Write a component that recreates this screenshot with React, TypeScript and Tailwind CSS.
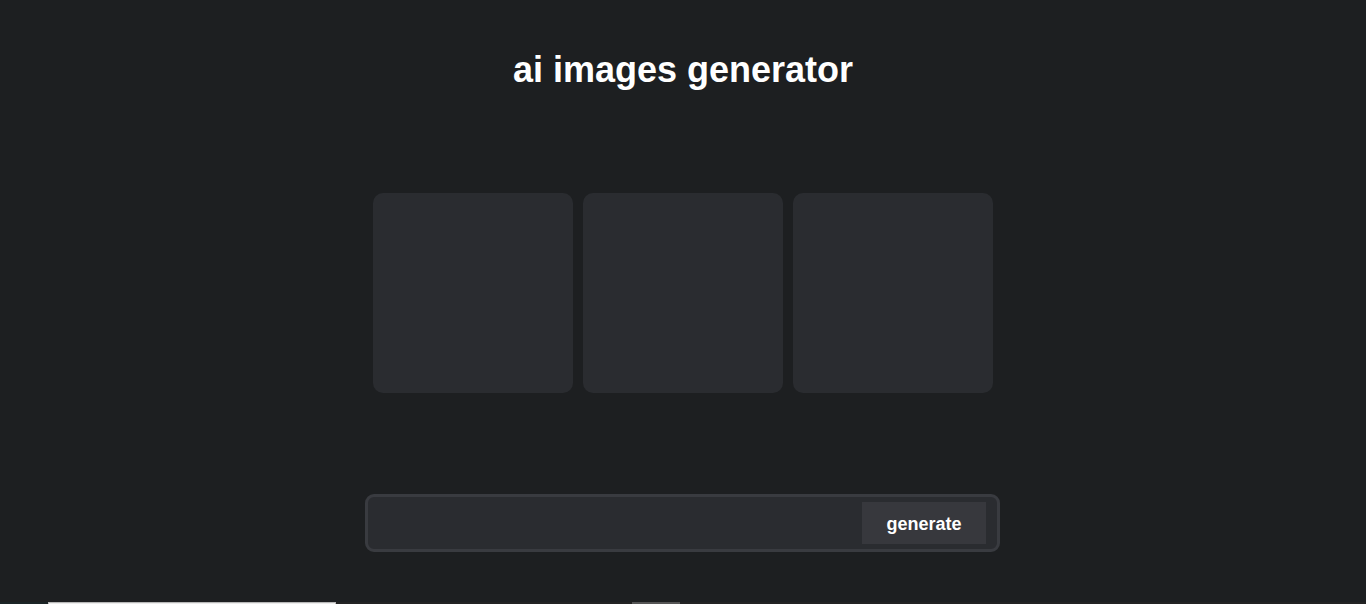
import { useState } from "react";

export default function App() {
  const [prompt, setPrompt] = useState("");
  const images = [0, 1, 2];

  return (
    <div className="min-h-screen bg-[#1d1f21] text-white font-['Liberation_Sans',Arial,sans-serif]">
      <main className="h-[602px] flex flex-col items-center">
        <h1 className="mt-[49px] text-[36px] leading-[42px] font-bold">
          ai images generator
        </h1>

        <div className="mt-[102px] flex gap-[10px]">
          {images.map((i) => (
            <div key={i} className="w-[200px] h-[200px] rounded-[10px] bg-[#2a2c30]" />
          ))}
        </div>

        <div className="mt-[101px] ml-[-1px] w-[635px] h-[58px] flex items-center rounded-[9px] border-[3px] border-[#393b40] bg-[#2a2c30] pr-[11px]">
          <input
            value={prompt}
            onChange={(e) => setPrompt(e.target.value)}
            className="flex-1 h-full bg-transparent px-4 text-white outline-none"
          />
          <button className="w-[124px] h-[42px] pt-[2px] bg-[#37383d] text-[18px] font-bold text-white">
            generate
          </button>
        </div>
      </main>

      <div className="flex h-[4px]">
        <div className="w-[48px] bg-[#1b2426]" />
        <div className="w-[288px] bg-[#ececec] border border-[#b8b8b8]" />
        <div className="w-[296px] bg-[#232323]" />
        <div className="w-[48px] bg-[#555555]" />
        <div className="flex-1 bg-[#232323]" />
      </div>
    </div>
  );
}
